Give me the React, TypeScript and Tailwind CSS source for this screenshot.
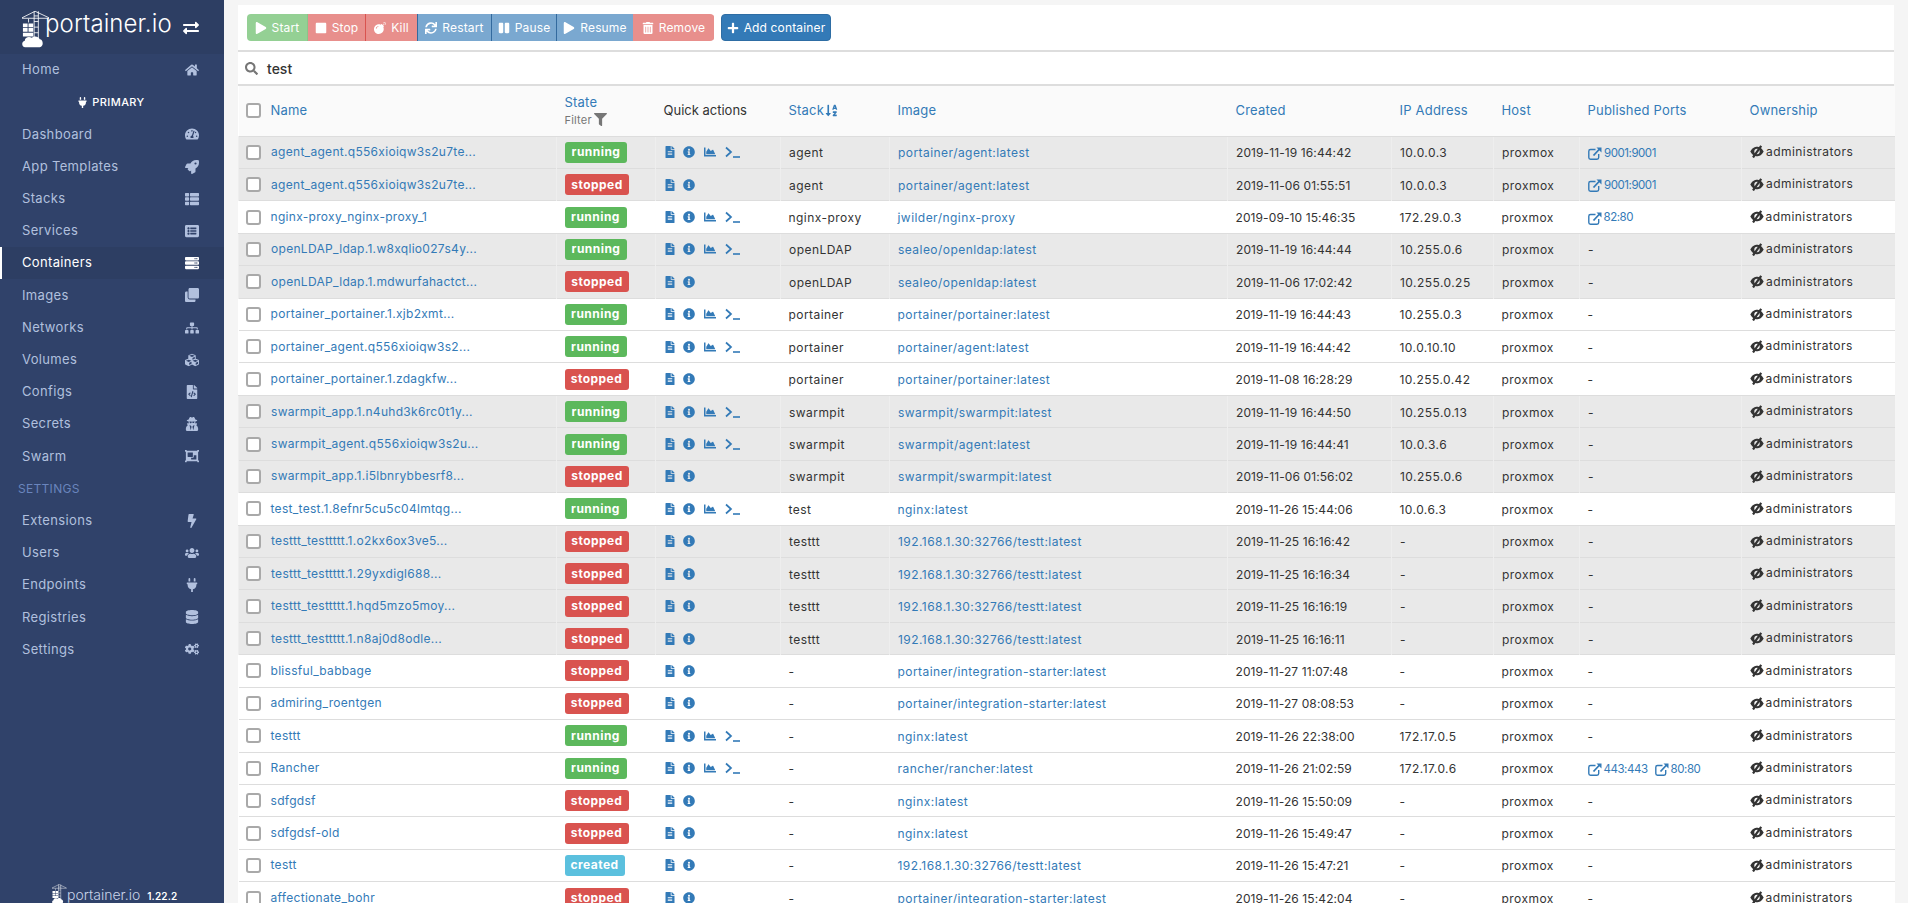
import React from "react";
import {
  FaHome, FaTachometerAlt, FaRocket, FaThList, FaListAlt, FaServer, FaClone, FaSitemap, FaCubes, FaFileCode,
  FaUserSecret, FaObjectGroup, FaBolt, FaUsers, FaPlug, FaDatabase, FaCogs, FaExchangeAlt, FaPlay, FaStop, FaBomb,
  FaSync, FaPause, FaTrashAlt, FaPlus, FaSearch, FaFilter, FaSortAlphaDown, FaFileAlt, FaInfoCircle, FaChartArea,
} from "react-icons/fa";

type Row = { n: string; s: "running" | "stopped" | "created"; st: string; i: string; c: string; ip: string; p: string[]; g?: boolean };

const pi = "portainer/integration-starter:latest";
const tt = "192.168.1.30:32766/testt:latest";
const rows: Row[] = [
  { n: "agent_agent.q556xioiqw3s2u7te...", s: "running", st: "agent", i: "portainer/agent:latest", c: "2019-11-19 16:44:42", ip: "10.0.0.3", p: ["9001:9001"], g: true },
  { n: "agent_agent.q556xioiqw3s2u7te...", s: "stopped", st: "agent", i: "portainer/agent:latest", c: "2019-11-06 01:55:51", ip: "10.0.0.3", p: ["9001:9001"], g: true },
  { n: "nginx-proxy_nginx-proxy_1", s: "running", st: "nginx-proxy", i: "jwilder/nginx-proxy", c: "2019-09-10 15:46:35", ip: "172.29.0.3", p: ["82:80"] },
  { n: "openLDAP_ldap.1.w8xqlio027s4y...", s: "running", st: "openLDAP", i: "sealeo/openldap:latest", c: "2019-11-19 16:44:44", ip: "10.255.0.6", p: [], g: true },
  { n: "openLDAP_ldap.1.mdwurfahactct...", s: "stopped", st: "openLDAP", i: "sealeo/openldap:latest", c: "2019-11-06 17:02:42", ip: "10.255.0.25", p: [], g: true },
  { n: "portainer_portainer.1.xjb2xmt...", s: "running", st: "portainer", i: "portainer/portainer:latest", c: "2019-11-19 16:44:43", ip: "10.255.0.3", p: [] },
  { n: "portainer_agent.q556xioiqw3s2...", s: "running", st: "portainer", i: "portainer/agent:latest", c: "2019-11-19 16:44:42", ip: "10.0.10.10", p: [] },
  { n: "portainer_portainer.1.zdagkfw...", s: "stopped", st: "portainer", i: "portainer/portainer:latest", c: "2019-11-08 16:28:29", ip: "10.255.0.42", p: [] },
  { n: "swarmpit_app.1.n4uhd3k6rc0t1y...", s: "running", st: "swarmpit", i: "swarmpit/swarmpit:latest", c: "2019-11-19 16:44:50", ip: "10.255.0.13", p: [], g: true },
  { n: "swarmpit_agent.q556xioiqw3s2u...", s: "running", st: "swarmpit", i: "swarmpit/agent:latest", c: "2019-11-19 16:44:41", ip: "10.0.3.6", p: [], g: true },
  { n: "swarmpit_app.1.i5lbnrybbesrf8...", s: "stopped", st: "swarmpit", i: "swarmpit/swarmpit:latest", c: "2019-11-06 01:56:02", ip: "10.255.0.6", p: [], g: true },
  { n: "test_test.1.8efnr5cu5c04lmtqg...", s: "running", st: "test", i: "nginx:latest", c: "2019-11-26 15:44:06", ip: "10.0.6.3", p: [] },
  { n: "testtt_testtttt.1.o2kx6ox3ve5...", s: "stopped", st: "testtt", i: tt, c: "2019-11-25 16:16:42", ip: "-", p: [], g: true },
  { n: "testtt_testtttt.1.29yxdigl688...", s: "stopped", st: "testtt", i: tt, c: "2019-11-25 16:16:34", ip: "-", p: [], g: true },
  { n: "testtt_testtttt.1.hqd5mzo5moy...", s: "stopped", st: "testtt", i: tt, c: "2019-11-25 16:16:19", ip: "-", p: [], g: true },
  { n: "testtt_testtttt.1.n8aj0d8odle...", s: "stopped", st: "testtt", i: tt, c: "2019-11-25 16:16:11", ip: "-", p: [], g: true },
  { n: "blissful_babbage", s: "stopped", st: "-", i: pi, c: "2019-11-27 11:07:48", ip: "-", p: [] },
  { n: "admiring_roentgen", s: "stopped", st: "-", i: pi, c: "2019-11-27 08:08:53", ip: "-", p: [] },
  { n: "testtt", s: "running", st: "-", i: "nginx:latest", c: "2019-11-26 22:38:00", ip: "172.17.0.5", p: [] },
  { n: "Rancher", s: "running", st: "-", i: "rancher/rancher:latest", c: "2019-11-26 21:02:59", ip: "172.17.0.6", p: ["443:443", "80:80"] },
  { n: "sdfgdsf", s: "stopped", st: "-", i: "nginx:latest", c: "2019-11-26 15:50:09", ip: "-", p: [] },
  { n: "sdfgdsf-old", s: "stopped", st: "-", i: "nginx:latest", c: "2019-11-26 15:49:47", ip: "-", p: [] },
  { n: "testt", s: "created", st: "-", i: tt, c: "2019-11-26 15:47:21", ip: "-", p: [] },
  { n: "affectionate_bohr", s: "stopped", st: "-", i: pi, c: "2019-11-26 15:42:04", ip: "-", p: [] },
];

const nav1: [string, React.ComponentType<{ className?: string }>][] = [
  ["Dashboard", FaTachometerAlt], ["App Templates", FaRocket], ["Stacks", FaThList], ["Services", FaListAlt],
  ["Containers", FaServer], ["Images", FaClone], ["Networks", FaSitemap], ["Volumes", FaCubes],
  ["Configs", FaFileCode], ["Secrets", FaUserSecret], ["Swarm", FaObjectGroup],
];
const nav2: [string, React.ComponentType<{ className?: string }>][] = [
  ["Extensions", FaBolt], ["Users", FaUsers], ["Endpoints", FaPlug], ["Registries", FaDatabase], ["Settings", FaCogs],
];

function Crane({ className }: { className: string }) {
  return (
    <svg viewBox="0 0 30 40" className={className} fill="none" stroke="white" strokeWidth="0.9">
      <path d="M0 8.500H29M14 1 L0 8M14 1 L29 8M13 1V33M17.500 1V33M13 6H17.500M13 12H17.500M13 18H17.500M13 24H17.500" />
      <path d="M7 9V13" />
      <path fill="white" stroke="none" d="M1 14h5v4h-5zM7 14h5v4h-5zM1 19h5v4h-5zM7 19h5v4h-5zM1 24h11v4h-11z" />
      <path fill="white" stroke="none" d="M3.500 39.500c-4 0-4.500-6-.5-7c0-4 5-5 7.500-3c2.500-2.500 7-2 8.500 1.500c4 0 4.500 8 0 8.500z" />
    </svg>
  );
}

function ExtLink() {
  return (
    <svg viewBox="0 0 14 13" className="w-[14px] h-[13px] shrink-0" fill="none" stroke="currentColor">
      <path d="M7.500 2.500H2.500a1.700 1.700 0 0 0-1.700 1.700V10.500a1.700 1.700 0 0 0 1.700 1.700H9a1.700 1.700 0 0 0 1.700-1.700V7" strokeWidth="1.400" />
      <path d="M5.500 8.500L12 1.500" strokeWidth="1.800" />
      <path d="M8.500 .5H13.500V5.500z" fill="currentColor" stroke="none" />
    </svg>
  );
}

function EyeOff() {
  return (
    <svg viewBox="0 0 14 13" className="w-[14px] h-[13px] shrink-0 text-[#333333]">
      <path fillRule="evenodd" fill="currentColor" d="M.3 6.500C2.500 2.500 5 1.700 7 1.700s4.500.8 6.700 4.800C11.500 10.500 9 11.300 7 11.300S2.500 10.500.3 6.500zM7 3.800A2.700 2.700 0 1 0 7 9.200 2.700 2.700 0 1 0 7 3.800z" />
      <path d="M3 12.500L11.200.8" stroke="currentColor" strokeWidth="2.200" fill="none" />
    </svg>
  );
}

function NavRow({ label, Icon, active }: { label: string; Icon: React.ComponentType<{ className?: string }>; active?: boolean }) {
  return (
    <div className={active
      ? "h-[32.2px] flex items-center justify-between pl-[20px] pr-[22px] border-l-2 border-white bg-[#2d3e63] text-white"
      : "h-[32.2px] flex items-center justify-between pl-[22px] pr-[22px] text-[#b1c0de]"}>
      <span className="text-[13px] tracking-[0.35px]">{label}</span>
      <span className={active ? "w-[20px] flex justify-center text-white" : "w-[20px] flex justify-center text-[#b1c0de]"}><Icon className="text-[14px]" /></span>
    </div>
  );
}

function ActionBtn({ label, Icon, cls }: { label: string; Icon: React.ComponentType<{ className?: string }>; cls: string }) {
  return (
    <div className={"h-[27px] flex items-center justify-center gap-[5px] text-white text-[12px] tracking-[0.15px] border-r " + cls}>
      <Icon className="text-[12px]" />
      <span>{label}</span>
    </div>
  );
}

function Check() {
  return <input type="checkbox" readOnly className="appearance-none block w-[15px] h-[15px] bg-white border-2 border-[#a9a9a9] rounded-[3px]" />;
}

const Head = "px-[8px] text-left font-normal text-[#337ab7] text-[13px] tracking-[0.2px] align-middle";

export default function App() {
  return (
    <div className="flex h-screen overflow-hidden font-['Inter','Liberation_Sans',sans-serif] text-[12px] text-[#333333]">
      <aside className="w-[224px] shrink-0 h-full bg-[#30426a] flex flex-col">
        <div className="h-[54px] shrink-0 bg-[#2d3e63] flex items-center pl-[22px] pr-[25px]">
          <Crane className="w-[28px] h-[38px] mr-[-5px] mt-[4px]" />
          <span className="text-white font-light text-[24px] tracking-[0.1px] flex-1 leading-none mb-[6px]">portainer.io</span>
          <FaExchangeAlt className="text-white text-[16px] mt-[1px]" />
        </div>
        <NavRow label="Home" Icon={FaHome} />
        <div className="h-[32.2px] flex items-center justify-center gap-[4px] text-white text-[11px] font-medium tracking-[0.4px] pr-[2px]">
          <FaPlug className="text-[11px]" /><span>PRIMARY</span>
        </div>
        {nav1.map(([l, I]) => <NavRow key={l} label={l} Icon={I} active={l === "Containers"} />)}
        <div className="h-[32.2px] flex items-center pl-[18px] text-[#6a85bd] text-[12px] tracking-[0.3px]">SETTINGS</div>
        {nav2.map(([l, I]) => <NavRow key={l} label={l} Icon={I} />)}
        <div className="mt-auto h-[14px] flex items-start pl-[52px]">
          <Crane className="w-[15px] h-[20px] mt-[-5px]" />
          <span className="text-[#c9d3e8] font-light text-[14px] leading-none ml-[0px] mt-[-1px]">portainer.io</span>
          <span className="text-white text-[10px] font-semibold ml-[7px] tracking-[0.15px] mt-[0px]">1.22.2</span>
        </div>
      </aside>

      <main className="flex-1 min-w-0 bg-[#f5f5f5] px-[14px] pt-[5px] overflow-hidden">
        <div className="bg-white">
          <div className="h-[47px] flex items-center pl-[9px] border-b-2 border-[#dddddd]">
            <div className="flex rounded-[4px] overflow-hidden">
              <ActionBtn label="Start" Icon={FaPlay} cls="w-[61px] bg-[#94d094] border-[#8ac58a]" />
              <ActionBtn label="Stop" Icon={FaStop} cls="w-[58px] bg-[#e88f8c] border-[#d9534f]" />
              <ActionBtn label="Kill" Icon={FaBomb} cls="w-[52px] bg-[#e88f8c] border-[#336a9e]" />
              <ActionBtn label="Restart" Icon={FaSync} cls="w-[74px] bg-[#7aa8d0] border-[#336a9e]" />
              <ActionBtn label="Pause" Icon={FaPause} cls="w-[65px] bg-[#7aa8d0] border-[#336a9e]" />
              <ActionBtn label="Resume" Icon={FaPlay} cls="w-[77px] bg-[#7aa8d0] border-[#e88f8c]" />
              <ActionBtn label="Remove" Icon={FaTrashAlt} cls="w-[80px] bg-[#e88f8c] border-[#e88f8c]" />
            </div>
            <div className="ml-[7px] w-[110px] h-[27px] rounded-[4px] bg-[#337ab7] border border-[#2e6da4] flex items-center justify-center gap-[5px] text-white text-[12px] tracking-[0.15px]">
              <FaPlus className="text-[12px]" /><span>Add container</span>
            </div>
          </div>
          <div className="h-[34px] flex items-center pl-[7px] border-b-2 border-[#dddddd]">
            <FaSearch className="text-[13px] text-[#767676]" />
            <span className="ml-[9px] text-[14px] text-[#333333] font-medium">test</span>
          </div>
          <table className="table-fixed border-collapse w-[1656px]">
            <colgroup>
              <col className="w-[318px]" /><col className="w-[99px]" /><col className="w-[125px]" /><col className="w-[109px]" />
              <col className="w-[338px]" /><col className="w-[164px]" /><col className="w-[102px]" /><col className="w-[86px]" />
              <col className="w-[162px]" /><col className="w-[153px]" />
            </colgroup>
            <thead>
              <tr className="h-[50px] bg-[#fafafa]">
                <th className={Head + " !pl-[7px]"}>
                  <div className="flex items-center gap-[10px]"><Check /><span>Name</span></div>
                </th>
                <th className={Head}>
                  <div className="leading-[18px]">State</div>
                  <div className="flex items-center gap-[2px] leading-[18px] text-[11px] text-[#767676] tracking-[0.2px]">Filter <FaFilter className="text-[13px]" /></div>
                </th>
                <th className={Head + " !text-[#333333] !tracking-[0px]"}>Quick actions</th>
                <th className={Head}><span className="inline-flex items-center gap-[1px]">Stack <FaSortAlphaDown className="text-[13px]" /></span></th>
                <th className={Head}>Image</th>
                <th className={Head}>Created</th>
                <th className={Head}>IP Address</th>
                <th className={Head}>Host</th>
                <th className={Head}>Published Ports</th>
                <th className={Head}>Ownership</th>
              </tr>
            </thead>
            <tbody>
              {rows.map((r, idx) => {
                const td = r.g
                  ? "px-[8px] pt-[2px] border-t border-l border-[#dddddd] border-l-[#eeeeee] whitespace-nowrap"
                  : "px-[8px] pt-[2px] border-t border-[#dddddd] whitespace-nowrap";
                return (
                  <tr key={idx} className={r.g ? "h-[32.43px] bg-[#e9e9e9] tracking-[0.45px]" : "h-[32.43px] bg-white tracking-[0.45px]"}>
                    <td className={td + " !pl-[7px] !pt-0 !tracking-[0.3px]"}>
                      <div className="flex items-center gap-[10px]"><Check /><span className="text-[#337ab7]">{r.n}</span></div>
                    </td>
                    <td className={td + " !pt-0"}>
                      <span className={
                        (r.s === "running" ? "w-[62px] bg-[#5cb85c]" : r.s === "stopped" ? "w-[64px] bg-[#d9534f]" : "w-[60px] bg-[#5bc0de]") +
                        " inline-flex items-center justify-center h-[21px] rounded-[3px] text-white font-bold text-[12px] align-middle"}>{r.s}</span>
                    </td>
                    <td className={td + " !pt-0"}>
                      <div className="flex items-center text-[#337ab7]">
                        <FaFileAlt className="text-[12px]" />
                        <FaInfoCircle className="text-[12px] ml-[7px]" />
                        {r.s === "running" && <FaChartArea className="text-[12px] ml-[9px]" />}
                        {r.s === "running" && (
                          <svg viewBox="0 0 15 12" className="w-[15px] h-[12px] ml-[9px]" fill="none" stroke="currentColor">
                            <path d="M1 1.500L6 6L1 10.500" strokeWidth="1.700" />
                            <path d="M8 11H15" strokeWidth="1.600" />
                          </svg>
                        )}
                      </div>
                    </td>
                    <td className={td}>{r.st}</td>
                    <td className={td}><span className="text-[#337ab7]">{r.i}</span></td>
                    <td className={td + " !tracking-[0.1px]"}>{r.c}</td>
                    <td className={td}>{r.ip}</td>
                    <td className={td}>proxmox</td>
                    <td className={td}>
                      {r.p.length === 0 ? "-" : (
                        <div className="flex items-center gap-[7px] text-[#337ab7] text-[11.5px] tracking-[-0.45px]">
                          {r.p.map((p) => (
                            <span key={p} className="inline-flex items-center gap-[2px]"><ExtLink />{p}</span>
                          ))}
                        </div>
                      )}
                    </td>
                    <td className={td}>
                      <span className="inline-flex items-center gap-[2px]"><EyeOff />administrators</span>
                    </td>
                  </tr>
                );
              })}
            </tbody>
          </table>
        </div>
      </main>
    </div>
  );
}
